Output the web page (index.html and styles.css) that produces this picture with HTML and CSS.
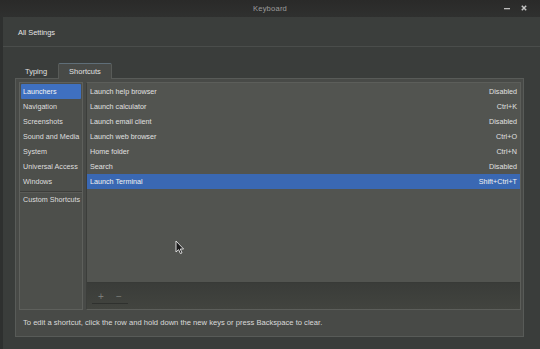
FILE: index.html
```html
<!DOCTYPE html>
<html>
<head>
<meta charset="utf-8">
<link rel="stylesheet" href="styles.css">
</head>
<body>
<div class="titlebar">
  <span class="title">Keyboard</span>
  <div class="wbtns">
    <svg class="wbtn" width="8" height="8" viewBox="0 0 8 8"><rect x="1" y="4" width="6" height="1.3" fill="#bdbdbd"/></svg>
    <svg class="wbtn" width="8" height="8" viewBox="0 0 8 8"><path d="M1.8 1.8 L6.2 6.2 M6.2 1.8 L1.8 6.2" stroke="#c4c4c4" stroke-width="1.5"/></svg>
  </div>
</div>
<div class="window">
  <div class="header">All Settings</div>
  <div class="content">
    <div class="tabs">
      <div class="tab">Typing</div>
      <div class="tab active">Shortcuts</div>
    </div>
    <div class="notebook">
      <div class="panes">
        <div class="sections">
          <div class="sec selected">Launchers</div>
          <div class="sec">Navigation</div>
          <div class="sec">Screenshots</div>
          <div class="sec">Sound and Media</div>
          <div class="sec">System</div>
          <div class="sec">Universal Access</div>
          <div class="sec">Windows</div>
          <div class="sep"></div>
          <div class="sec">Custom Shortcuts</div>
        </div>
        <div class="right">
          <div class="tree">
            <div class="row"><span>Launch help browser</span><span>Disabled</span></div>
            <div class="row"><span>Launch calculator</span><span>Ctrl+K</span></div>
            <div class="row"><span>Launch email client</span><span>Disabled</span></div>
            <div class="row"><span>Launch web browser</span><span>Ctrl+O</span></div>
            <div class="row"><span>Home folder</span><span>Ctrl+N</span></div>
            <div class="row"><span>Search</span><span>Disabled</span></div>
            <div class="row selected"><span>Launch Terminal</span><span>Shift+Ctrl+T</span></div>
          </div>
          <div class="toolbar">
            <div class="tbtn">+</div>
            <div class="tbtn">−</div>
          </div>
        </div>
      </div>
      <div class="hint">To edit a shortcut, click the row and hold down the new keys or press Backspace to clear.</div>
    </div>
  </div>
</div>
<svg class="cursor" width="10" height="15" viewBox="0 0 10 15"><path d="M1 1 L1 12 L3.6 9.6 L5.4 13.6 L7 12.9 L5.3 9 L8.6 9 Z" fill="#1a1a1a" stroke="#e8e8e8" stroke-width="0.9"/></svg>
</body>
</html>
```

FILE: styles.css
```css
html, body {
  margin: 0;
  padding: 0;
}
body {
  width: 540px;
  height: 349px;
  overflow: hidden;
  background: #323533;
  font-family: "Liberation Sans", Arial, sans-serif;
  font-size: 7.2px;
  color: #dcdcdc;
  position: relative;
}
.titlebar {
  height: 17px;
  background: linear-gradient(#2a2a29, #2f302f);
  position: relative;
  display: flex;
  align-items: center;
  justify-content: center;
}
.title {
  color: #9c9c9c;
  font-size: 7.6px;
  letter-spacing: 0.2px;
}
.wbtns {
  position: absolute;
  right: 12px;
  top: 4px;
  display: flex;
  gap: 9px;
}
.wbtn {
  display: block;
}
.window {
  background: #3a3d3b;
  height: 332px;
  border-left: 3px solid #2e302f;
  box-sizing: border-box;
}
.header {
  height: 30px;
  background: #3b3e3c;
  border-bottom: 1px solid #4a4d4b;
  box-sizing: border-box;
  display: flex;
  align-items: center;
  padding-left: 15px;
  padding-top: 2px;
  color: #e4e4e4;
  font-size: 7.4px;
}
.content {
  padding: 15px 16px 0 12px;
}
.tabs {
  display: flex;
  align-items: flex-end;
  height: 16px;
  padding-left: 3px;
}
.tab {
  height: 14px;
  padding: 0 8px 0 7px;
  display: flex;
  align-items: center;
  color: #e0e0e0;
  font-size: 7.5px;
  margin-right: 3px;
}
.tab.active {
  height: 16px;
  padding: 0 10px;
  background: #484a47;
  border: 1px solid #585b58;
  border-top-color: #5f6e78;
  border-bottom: none;
  border-radius: 2px 2px 0 0;
  box-sizing: border-box;
  margin-bottom: -1px;
  position: relative;
  z-index: 1;
}
.notebook {
  background: #484a47;
  border: 1px solid #585b58;
  height: 259px;
  box-sizing: border-box;
  padding: 3px 2px 0 3px;
  display: flex;
  flex-direction: column;
}
.panes {
  display: flex;
  height: 228px;
  gap: 3px;
}
.sections {
  width: 64px;
  box-sizing: border-box;
  background: #4d4f4b;
  border: 1px solid #5e605c;
  padding: 1px;
}
.sec {
  height: 15px;
  line-height: 15px;
  padding-left: 2px;
  white-space: nowrap;
  overflow: hidden;
  color: #dedede;
}
.sec.selected {
  background: #3f70c0;
  color: #f4f4f4;
  border-radius: 1px;
}
.sep {
  height: 3px;
  border-bottom: 1px solid #3d3e3b;
  box-shadow: 0 1px 0 #5a5b57;
  margin: 0 -1px 0;
  box-sizing: border-box;
}
.right {
  flex: 1;
  display: flex;
  flex-direction: column;
  border: 1px solid #5c5e5a;
  border-left-color: #3c3e3b;
}
.tree {
  height: 200px;
  background: #525450;
  padding-top: 1px;
  box-sizing: border-box;
  border-bottom: 1px solid #383a37;
}
.row {
  height: 15px;
  display: flex;
  justify-content: space-between;
  align-items: center;
  padding: 0 3px 0 3px;
  color: #e0e0e0;
}
.row.selected {
  background: #3a68b3;
  color: #f2f2f2;
}
.toolbar {
  flex: 1;
  background: linear-gradient(#3a3c39, #42443f);
  display: flex;
  align-items: center;
  padding-left: 5px;
  padding-top: 2px;
}
.tbtn {
  width: 18px;
  height: 13px;
  display: flex;
  align-items: center;
  justify-content: center;
  color: #7c7e7a;
  font-size: 10px;
  border-bottom: 1px solid #2f312e;
}
.hint {
  flex: 1;
  display: flex;
  align-items: center;
  padding-left: 4px;
  padding-bottom: 2px;
  color: #dadada;
  font-size: 7.6px;
}
.cursor {
  position: absolute;
  left: 175px;
  top: 240px;
}
```
